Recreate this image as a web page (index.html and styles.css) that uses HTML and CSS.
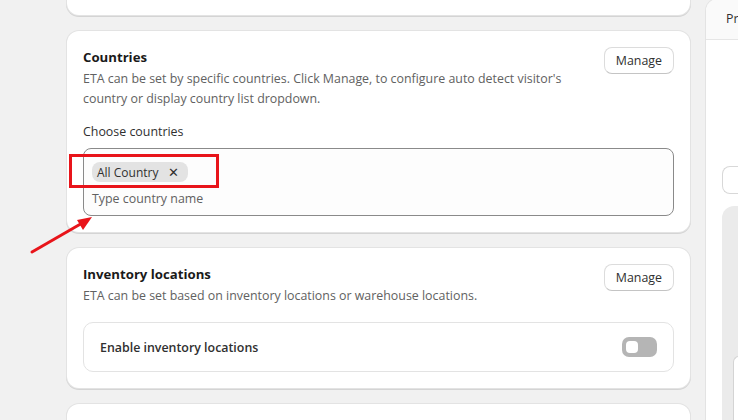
FILE: index.html
```html
<!DOCTYPE html>
<html lang="en">

<head>
    <meta charset="UTF-8">
    <meta name="viewport" content="width=device-width, initial-scale=1.0">
    <title>Delivery ETA Settings</title>
    <link rel="stylesheet" href="styles.css">
</head>

<body>
    <div class="layout">
        <main class="main-col">
            <section class="card card-top"></section>

            <section class="card">
                <div class="card-head">
                    <div>
                        <h2>Countries</h2>
                        <p class="desc">ETA can be set by specific countries. Click Manage, to configure auto detect visitor's country or display country list dropdown.</p>
                    </div>
                    <button class="btn">Manage</button>
                </div>
                <label class="field-label">Choose countries</label>
                <div class="tag-input">
                    <div class="tags">
                        <span class="tag">All Country <span class="tag-x">&#x2715;</span></span>
                    </div>
                    <div class="placeholder">Type country name</div>
                    <div class="callout-box"></div>
                </div>
            </section>

            <section class="card">
                <div class="card-head">
                    <div>
                        <h2>Inventory locations</h2>
                        <p class="desc">ETA can be set based on inventory locations or warehouse locations.</p>
                    </div>
                    <button class="btn">Manage</button>
                </div>
                <div class="setting-row">
                    <span>Enable inventory locations</span>
                    <span class="toggle"><span class="knob"></span></span>
                </div>
            </section>

            <section class="card card-bottom"></section>
        </main>

        <aside class="preview">
            <div class="preview-head"><span>Pr</span></div>
            <div class="preview-body">
                <div class="preview-input"></div>
                <div class="preview-stage">
                    <div class="preview-inner"></div>
                </div>
            </div>
        </aside>
    </div>

    <svg class="arrow" width="80" height="50" viewBox="0 0 80 50">
        <line x1="4" y1="44" x2="56" y2="14" stroke="#e8141a" stroke-width="3" stroke-linecap="round" />
        <polygon points="64,9 49,12 55,22" fill="#e8141a" />
    </svg>
</body>

</html>
```

FILE: styles.css
```css
body {
    font-family: "Open Sans", "Noto Sans", sans-serif;
    background-color: #f1f1f1;
    color: #303030;
    margin: 0;
    padding: 0;
    font-size: 12.4px;
    position: relative;
    height: 420px;
    overflow: hidden;
}

.layout {
    display: flex;
    gap: 16px;
    padding-left: 67px;
    margin-top: -40px;
}

.main-col {
    width: 623px;
    display: flex;
    flex-direction: column;
    gap: 16px;
    flex-shrink: 0;
}

.card {
    background-color: #fff;
    border-radius: 12px;
    padding: 16px;
    box-shadow: 0 0 0 1px #e3e3e3, 0 1px 0 1px #d4d4d4;
}

.card-top {
    height: 23px;
}

.card-bottom {
    height: 40px;
}

.card-head {
    display: flex;
    justify-content: space-between;
    align-items: flex-start;
    gap: 20px;
}

.card-head h2 {
    margin: 0;
    font-size: 13.2px;
    line-height: 20px;
    font-weight: 700;
    color: #1a1a1a;
}

.desc {
    margin: 2px 0 0;
    line-height: 20px;
    color: #616161;
    max-width: 500px;
}

.btn {
    font-family: inherit;
    font-size: 12.4px;
    color: #303030;
    background-color: #fff;
    border: 1px solid #dcdcdc;
    border-bottom-color: #c4c4c4;
    border-radius: 8px;
    padding: 3px 11px 3px;
    line-height: 19px;
    flex-shrink: 0;
}

.field-label {
    display: block;
    margin-top: 13px;
    line-height: 20px;
    color: #303030;
}

.tag-input {
    position: relative;
    margin-top: 6px;
    border: 1px solid #8a8a8a;
    border-radius: 8px;
    background-color: #fdfdfd;
    padding: 13px 8px 6px;
}

.tag {
    display: inline-flex;
    align-items: center;
    gap: 10px;
    background-color: #e3e3e3;
    border-radius: 8px;
    padding: 0 9px 0 5px;
    height: 20px;
    font-size: 12px;
    color: #303030;
}

.tag-x {
    font-size: 12.5px;
    color: #303030;
}

.placeholder {
    margin-top: 7px;
    line-height: 20px;
    color: #616161;
}

.callout-box {
    position: absolute;
    left: -15px;
    top: 5px;
    width: 144px;
    height: 28px;
    border: 3px solid #e8141a;
}

.setting-row {
    margin-top: 16px;
    display: flex;
    justify-content: space-between;
    align-items: center;
    border: 1px solid #e3e3e3;
    border-radius: 10px;
    padding: 14px 16px 14px 16px;
    font-weight: 600;
    color: #303030;
}

.toggle {
    width: 35px;
    height: 20px;
    background-color: #b5b5b5;
    border-radius: 7px;
    display: flex;
    align-items: center;
    padding-left: 4px;
    box-sizing: border-box;
}

.knob {
    width: 12px;
    height: 12px;
    background-color: #fff;
    border-radius: 4px;
}

.preview {
    flex: 1;
    background-color: #fff;
    border-radius: 12px 0 0 12px;
    box-shadow: 0 0 0 1px #e3e3e3;
    margin-top: 39px;
    min-height: 460px;
}

.preview-head {
    height: 40px;
    line-height: 40px;
    padding-left: 20px;
    border-bottom: 1px solid #e6e6e6;
    background-color: #fafafa;
    border-radius: 12px 0 0 0;
    color: #303030;
    overflow: hidden;
}

.preview-body {
    padding: 126px 0 0 16px;
}

.preview-input {
    height: 26px;
    border: 1px solid #d8d8d8;
    border-right: none;
    border-radius: 8px 0 0 8px;
}

.preview-stage {
    margin-top: 12px;
    height: 260px;
    background-color: #ebebeb;
    border-radius: 12px 0 0 0;
    padding: 150px 0 0 11px;
    box-sizing: border-box;
}

.preview-inner {
    height: 80px;
    background-color: #fff;
    border: 1px solid #d4d4d4;
    border-right: none;
    border-radius: 8px 0 0 0;
}

.arrow {
    position: absolute;
    left: 28px;
    top: 208px;
}
```
